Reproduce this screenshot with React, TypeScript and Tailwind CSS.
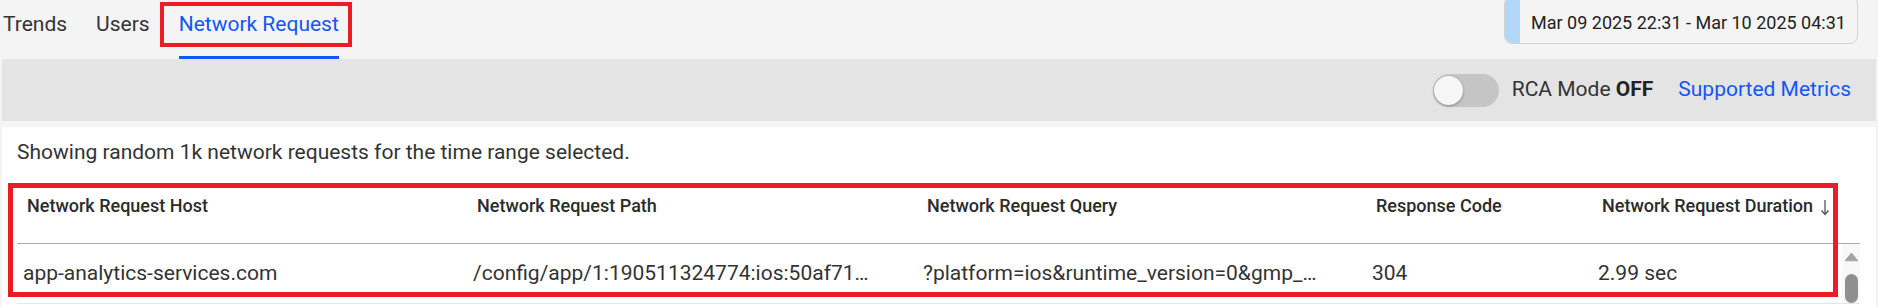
import React from "react";

const columns = [
  { title: "Network Request Host", value: "app-analytics-services.com", width: "w-[450px]" },
  { title: "Network Request Path", value: "/config/app/1:190511324774:ios:50af71…", width: "w-[450px]" },
  { title: "Network Request Query", value: "?platform=ios&runtime_version=0&gmp_…", width: "w-[449px]" },
  { title: "Response Code", value: "304", width: "w-[226px]" },
];

const App = () => {
  return (
    <div className="h-[307px] w-full overflow-hidden bg-[#f4f4f4] font-['Roboto',sans-serif] text-[#2e2e2e]">
      {/* top bar */}
      <div className="flex h-[59px] items-start justify-between">
        <div className="ml-[3px] flex h-[59px] gap-[29px] text-[21px] leading-[25px]">
          <div className="flex flex-col pt-[12px] text-[#333]">Trends</div>
          <div className="flex flex-col pt-[12px] text-[#333]">Users</div>
          <div className="relative flex flex-col pt-[12px] text-[#1256f5]">
            <span>Network Request</span>
            <div className="mt-auto h-[3px] bg-[#1256f5]" />
            <div className="absolute left-[-19px] top-[2px] h-[45px] w-[192px] border-[4px] border-[#ec1c24]" />
          </div>
        </div>
        <div className="mr-[20px] -mt-[4px] flex h-[48px] w-[354px] overflow-hidden rounded-[8px] border border-[#d2d2d2] bg-[#f4f4f4]">
          <div className="w-[15px] bg-[#b1d8f8]" />
          <div className="flex items-center pl-[11px] pt-[4px] text-[18px] text-[#222]">
            Mar 09 2025 22:31 - Mar 10 2025 04:31
          </div>
        </div>
      </div>

      {/* toolbar */}
      <div className="mx-[2px] flex h-[62px] items-center justify-end bg-[#e4e4e4] pr-[25px] text-[21px]">
        <div className="flex h-[33px] w-[66px] items-center rounded-full bg-[#c5c5c5] pl-[1px]">
          <div className="h-[29px] w-[29px] rounded-full bg-[#f6f6f6] shadow-[0_1px_3px_rgba(0,0,0,0.35)]" />
        </div>
        <span className="ml-[13px] text-[#333]">
          RCA Mode <b className="font-bold text-[#222]">OFF</b>
        </span>
        <span className="ml-[25px] text-[#1256f5]">Supported Metrics</span>
      </div>

      {/* content */}
      <div className="mx-[2px] mt-[6px] h-[200px] bg-white pl-[15px] pr-[16px] pt-[13px]">
        <p className="text-[21px] leading-[25px] text-[#333]">
          Showing random 1k network requests for the time range selected.
        </p>

        <div className="relative mt-[18px]">
          <div className="flex h-[61px] border-b border-[#ababab] pt-[11px] text-[18px] font-medium leading-[24px] text-[#2b2b2b]">
            {columns.map((c) => (
              <div key={c.title} className={`${c.width} shrink-0 pl-[10px]`}>
                {c.title}
              </div>
            ))}
            <div className="flex flex-1 items-start pl-[10px]">
              <span>Network Request Duration</span>
              <svg className="ml-[7px] mt-[5px]" width="10" height="17" viewBox="0 0 10 17">
                <path d="M5 1v14M1.5 11.5 5 15.5l3.5-4" fill="none" stroke="#555" strokeWidth="1.3" />
              </svg>
            </div>
          </div>

          <div className="flex h-[60px] border-b border-[#e6e6e6] text-[21px] leading-[25px] text-[#333]">
            {columns.map((c) => (
              <div key={c.title} className={`${c.width} flex shrink-0 items-center pl-[6px]`}>
                {c.value}
              </div>
            ))}
            <div className="flex flex-1 items-center pl-[6px]">2.99 sec</div>
            <div className="flex w-[18px] flex-col items-center bg-[#f8f8f8] pt-[8px]">
              <svg width="15" height="10" viewBox="0 0 15 10">
                <path d="M7.5 1 14 9H1z" fill="#a3a3a3" stroke="#a3a3a3" strokeLinejoin="round" />
              </svg>
              <div className="mt-[12px] h-[30px] w-[13px] rounded-full bg-[#8f8f8f]" />
            </div>
          </div>

          <div className="absolute left-[-9px] top-0 h-[114px] w-[1830px] border-[5px] border-[#ec1c24]" />
        </div>
      </div>
    </div>
  );
};

export default App;
